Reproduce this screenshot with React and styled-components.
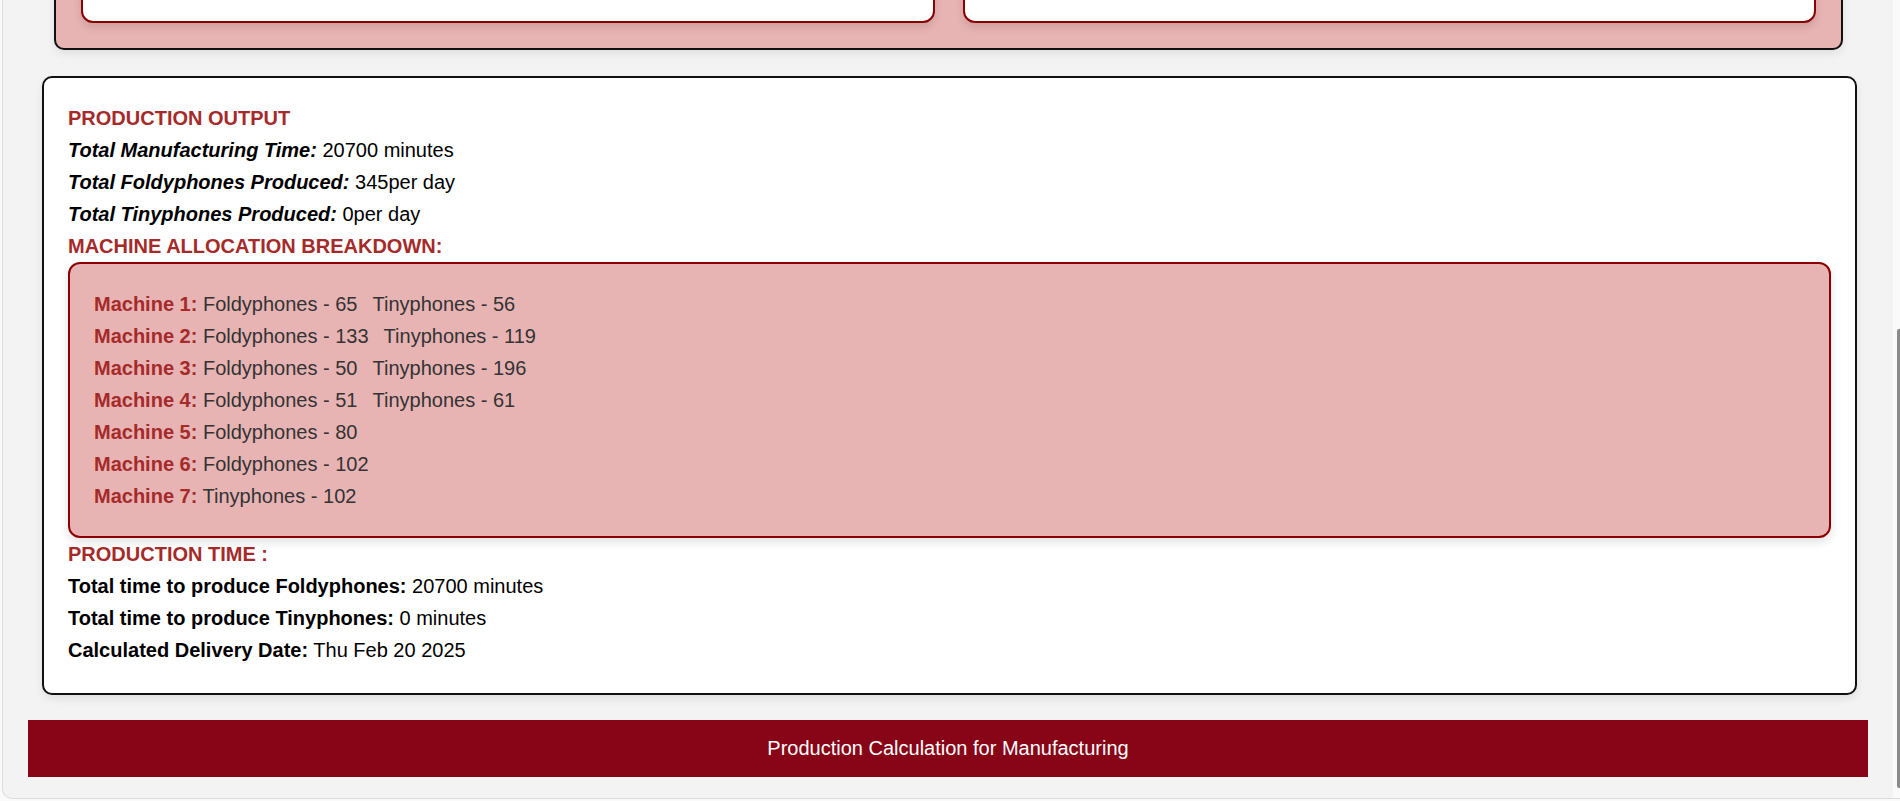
import React, { useLayoutEffect, useRef } from "react";
import styled, { createGlobalStyle } from "styled-components";

const GlobalStyle = createGlobalStyle`
  html, body {
    margin: 0;
    padding: 0;
    background: #fafafa;
  }
  body {
    font-family: "Liberation Sans", Arial, sans-serif;
    color: #000;
  }
  * {
    box-sizing: border-box;
  }
`;

const Frame = styled.div`
  height: calc(100vh - 2px);
  margin-left: 2px;
  display: flex;
  border-left: 1px solid #dcdcdc;
  border-bottom: 1px solid #dcdcdc;
  border-bottom-left-radius: 10px;
  background: #f3f3f3;
  overflow: hidden;
`;

const Scroller = styled.div`
  flex: 1;
  min-width: 0;
  overflow-y: auto;
  scrollbar-width: none;

  &::-webkit-scrollbar {
    display: none;
  }
`;

const Rail = styled.div`
  flex: 0 0 7px;
  display: flex;
  flex-direction: column;
  align-items: flex-end;
  background: #fafafa;
`;

const Thumb = styled.div`
  width: 3px;
  background: #8a8a8a;
  border-radius: 2px 0 0 2px;
`;

const Page = styled.main`
  padding: 25px 25px 21px;
`;

const InputPanel = styled.section`
  margin: 0 25px 0 26px;
  padding: 25px;
  display: grid;
  grid-template-columns: 1fr 1fr;
  gap: 28px;
  background: #e8b3b3;
  border: 2px solid #111;
  border-radius: 10px;
  box-shadow: 0 4px 8px rgba(0, 0, 0, 0.08);
`;

const InputCard = styled.div`
  min-height: 530px;
  background: #fff;
  border: 2px solid #8b0000;
  border-radius: 12px;
  box-shadow: 0 4px 8px rgba(0, 0, 0, 0.12);
`;

const ResultCard = styled.section`
  margin: 26px 11px 0 14px;
  padding: 24px 24px 27px;
  background: #fff;
  border: 2px solid #111;
  border-radius: 10px;
  box-shadow: 0 4px 8px rgba(0, 0, 0, 0.08);
  font-size: 20px;
  line-height: 32px;
`;

const SectionTitle = styled.h3`
  margin: 0;
  font-size: 20px;
  line-height: 32px;
  font-weight: bold;
  color: #a52a2a;
  text-transform: uppercase;
`;

const Line = styled.div`
  margin: 0;
`;

const ItalicLabel = styled.strong`
  font-style: italic;
`;

const Breakdown = styled.div`
  padding: 24px;
  background: #e8b3b3;
  border: 2px solid #8b0000;
  border-radius: 12px;
  box-shadow: 0 4px 10px rgba(0, 0, 0, 0.12);
  color: #333;
`;

const MachineLabel = styled.strong`
  color: #a52a2a;
`;

const Part = styled.span`
  & + & {
    margin-left: 15px;
  }
`;

const Footer = styled.footer`
  margin-top: 25px;
  height: 57px;
  display: flex;
  align-items: center;
  justify-content: center;
  background: #880417;
  color: #fff;
  font-size: 20px;
`;

const machines = [
  { id: 1, parts: ["Foldyphones - 65", "Tinyphones - 56"] },
  { id: 2, parts: ["Foldyphones - 133", "Tinyphones - 119"] },
  { id: 3, parts: ["Foldyphones - 50", "Tinyphones - 196"] },
  { id: 4, parts: ["Foldyphones - 51", "Tinyphones - 61"] },
  { id: 5, parts: ["Foldyphones - 80"] },
  { id: 6, parts: ["Foldyphones - 102"] },
  { id: 7, parts: ["Tinyphones - 102"] },
];

export default function App() {
  const scrollRef = useRef(null);
  const [thumb, setThumb] = React.useState({ top: 0, height: 0 });

  // the view sits scrolled to the end of the results
  useLayoutEffect(() => {
    const el = scrollRef.current;
    if (!el) return;
    el.scrollTop = el.scrollHeight;
    const ratio = el.clientHeight / el.scrollHeight;
    setThumb({
      top: el.scrollTop * ratio,
      height: el.clientHeight * ratio - 10,
    });
  }, []);

  return (
    <>
      <GlobalStyle />
      <Frame>
        <Scroller ref={scrollRef}>
          <Page>
            <InputPanel>
              <InputCard />
              <InputCard />
            </InputPanel>

            <ResultCard>
              <SectionTitle>Production Output</SectionTitle>
              <Line>
                <ItalicLabel>Total Manufacturing Time:</ItalicLabel> 20700 minutes
              </Line>
              <Line>
                <ItalicLabel>Total Foldyphones Produced:</ItalicLabel> 345per day
              </Line>
              <Line>
                <ItalicLabel>Total Tinyphones Produced:</ItalicLabel> 0per day
              </Line>

              <SectionTitle>Machine Allocation Breakdown:</SectionTitle>
              <Breakdown>
                {machines.map((m) => (
                  <Line key={m.id}>
                    <MachineLabel>Machine {m.id}:</MachineLabel>{" "}
                    {m.parts.map((p) => (
                      <Part key={p}>{p}</Part>
                    ))}
                  </Line>
                ))}
              </Breakdown>

              <SectionTitle>Production Time :</SectionTitle>
              <Line>
                <strong>Total time to produce Foldyphones:</strong> 20700 minutes
              </Line>
              <Line>
                <strong>Total time to produce Tinyphones:</strong> 0 minutes
              </Line>
              <Line>
                <strong>Calculated Delivery Date:</strong> Thu Feb 20 2025
              </Line>
            </ResultCard>

            <Footer>Production Calculation for Manufacturing</Footer>
          </Page>
        </Scroller>
        <Rail>
          <Thumb style={{ marginTop: thumb.top, height: thumb.height }} />
        </Rail>
      </Frame>
    </>
  );
}
